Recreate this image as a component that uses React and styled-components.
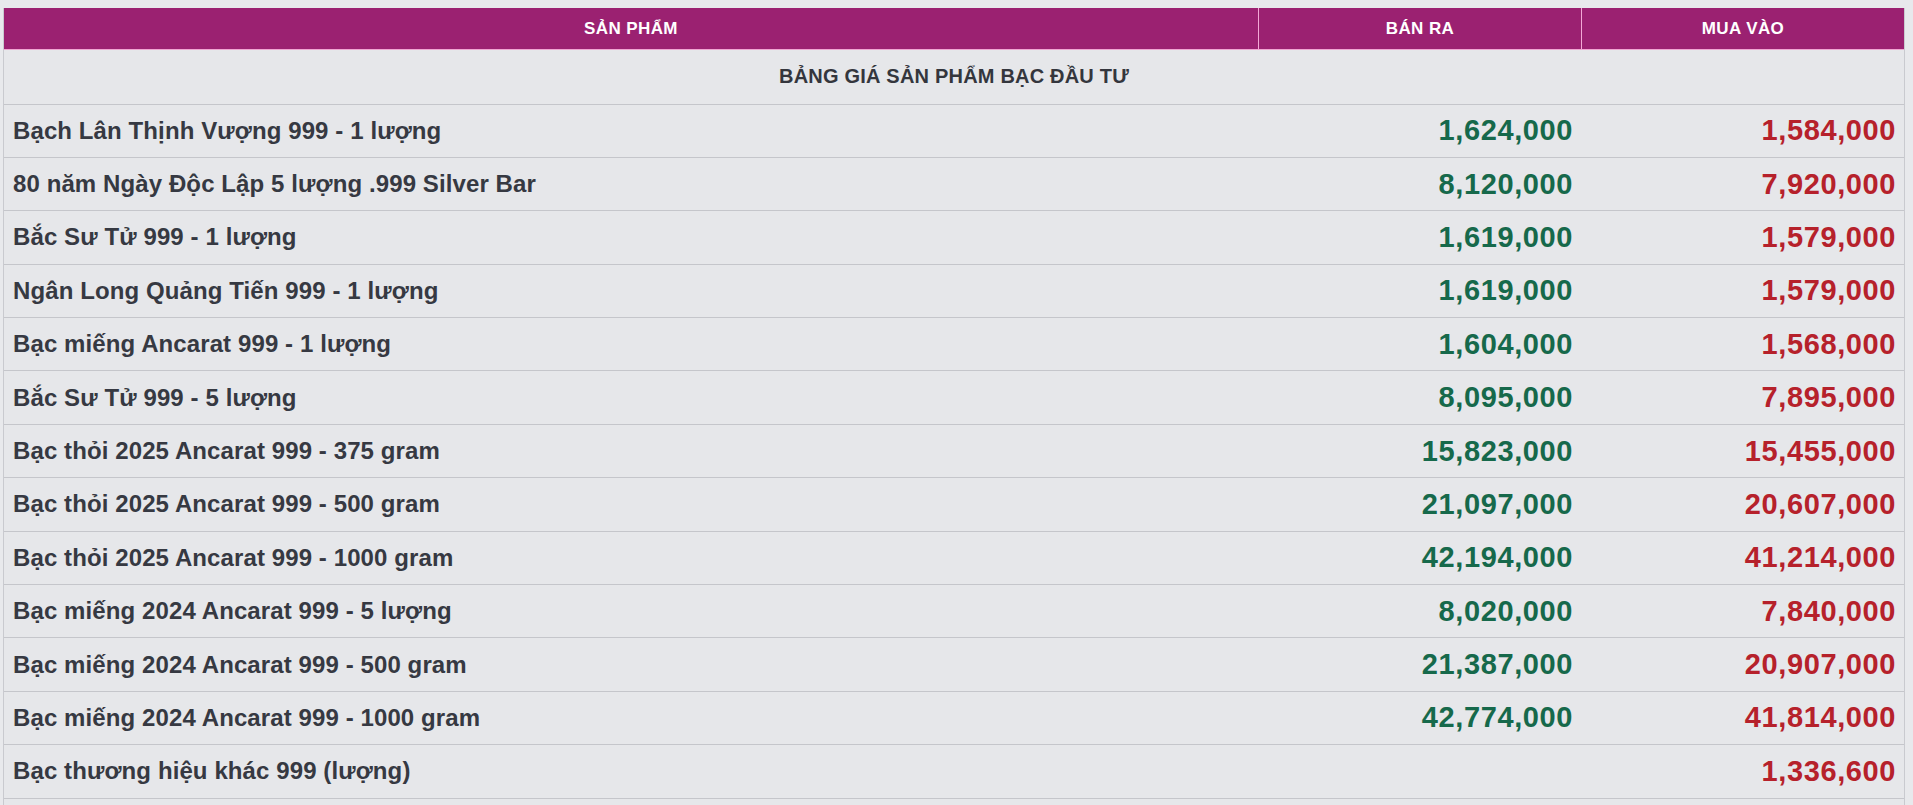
import React from 'react'
import styled, { createGlobalStyle } from 'styled-components'

const GlobalStyle = createGlobalStyle`
    html, body {
        margin: 0;
        padding: 0;
        background: #e8e9ec;
        font-family: "Liberation Sans", Arial, sans-serif;
    }
`

const Page = styled.div`
    padding: 8px 8px 0 3px;
`

const Table = styled.div`
    border-left: 1px solid #c9cacf;
    border-right: 1px solid #c9cacf;
    background: #e6e7ea;
`

const Row = styled.div`
    display: grid;
    grid-template-columns: 66% 17% 17%;
    box-sizing: border-box;
    height: ${p => p.h}px;
    border-bottom: 1px solid ${p => p.line || '#c5c6cb'};
`

const HeadRow = styled(Row)`
    background: #9b2171;
`

const HeadCell = styled.div`
    display: flex;
    align-items: center;
    justify-content: center;
    color: #fff;
    font-weight: bold;
    font-size: 17px;
    letter-spacing: 0.4px;
    border-left: ${p => (p.first ? 'none' : '1px solid #f3a9d6')};
`

const TitleCell = styled.div`
    grid-column: 1 / 4;
    display: flex;
    align-items: center;
    justify-content: center;
    color: #34363d;
    font-weight: bold;
    font-size: 20px;
    letter-spacing: 0.2px;
`

const Name = styled.div`
    display: flex;
    align-items: center;
    padding-left: 9px;
    color: #363942;
    font-weight: bold;
    font-size: 24px;
    letter-spacing: 0.1px;
`

const Price = styled.div`
    display: flex;
    align-items: center;
    justify-content: flex-end;
    padding-right: 8px;
    color: ${p => (p.sell ? '#16694b' : '#b6212b')};
    font-weight: bold;
    font-size: 29px;
    letter-spacing: 0.6px;
`

const products = [
    ['Bạch Lân Thịnh Vượng 999 - 1 lượng', '1,624,000', '1,584,000'],
    ['80 năm Ngày Độc Lập 5 lượng .999 Silver Bar', '8,120,000', '7,920,000'],
    ['Bắc Sư Tử 999 - 1 lượng', '1,619,000', '1,579,000'],
    ['Ngân Long Quảng Tiến 999 - 1 lượng', '1,619,000', '1,579,000'],
    ['Bạc miếng Ancarat 999 - 1 lượng', '1,604,000', '1,568,000'],
    ['Bắc Sư Tử 999 - 5 lượng', '8,095,000', '7,895,000'],
    ['Bạc thỏi 2025 Ancarat 999 - 375 gram', '15,823,000', '15,455,000'],
    ['Bạc thỏi 2025 Ancarat 999 - 500 gram', '21,097,000', '20,607,000'],
    ['Bạc thỏi 2025 Ancarat 999 - 1000 gram', '42,194,000', '41,214,000'],
    ['Bạc miếng 2024 Ancarat 999 - 5 lượng', '8,020,000', '7,840,000'],
    ['Bạc miếng 2024 Ancarat 999 - 500 gram', '21,387,000', '20,907,000'],
    ['Bạc miếng 2024 Ancarat 999 - 1000 gram', '42,774,000', '41,814,000'],
    ['Bạc thương hiệu khác 999 (lượng)', '', '1,336,600'],
]

function App() {
    return (
        <Page>
            <GlobalStyle />
            <Table>
                <HeadRow h={42} line="#f0a6d3">
                    <HeadCell first>SẢN PHẨM</HeadCell>
                    <HeadCell>BÁN RA</HeadCell>
                    <HeadCell>MUA VÀO</HeadCell>
                </HeadRow>
                <Row h={54.5}>
                    <TitleCell>BẢNG GIÁ SẢN PHẨM BẠC ĐẦU TƯ</TitleCell>
                </Row>
                {products.map(([name, sell, buy]) => (
                    <Row h={53.4} key={name}>
                        <Name>{name}</Name>
                        <Price sell>{sell}</Price>
                        <Price>{buy}</Price>
                    </Row>
                ))}
                <Row h={53.4}>
                    <Name />
                    <Price sell />
                    <Price />
                </Row>
            </Table>
        </Page>
    )
}

export default App
